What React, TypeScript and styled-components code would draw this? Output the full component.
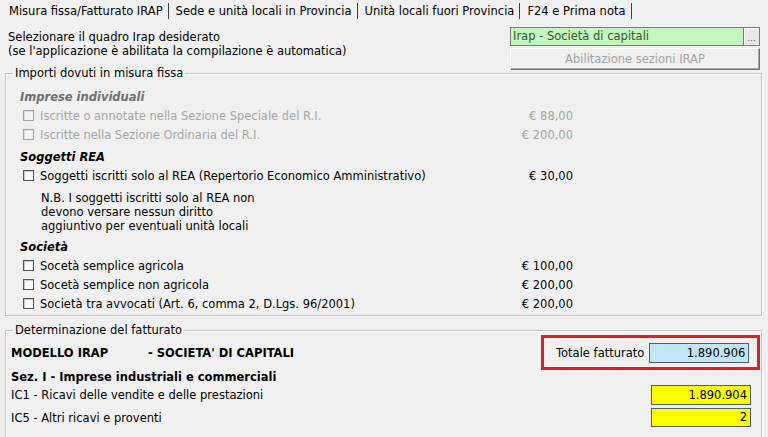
import React from "react";
import styled, {createGlobalStyle} from "styled-components";

const GlobalStyle = createGlobalStyle`
body {
  margin: 0;
  background: #f0f0f0;
  font-family: "DejaVu Sans", sans-serif;
  font-size: 11.5px;
  color: #000;
}
`

const Page = styled.div`
width: 768px;
height: 437px;
overflow: hidden;
background: #f0f0f0;
`

const TabBar = styled.div`
display: flex;
align-items: center;
height: 21px;
padding-left: 2px;
`

const Tab = styled.div`
height: 16px;
line-height: 17px;
padding: 0 5px 0 7px;
border-right: 1px solid #3c3c3c;
white-space: nowrap;
`

const Header = styled.div`
display: flex;
justify-content: space-between;
padding: 6px 8px 0 8px;
`

const Hint = styled.div`
padding-top: 3px;
line-height: 14px;
`

const RightCol = styled.div`
display: flex;
flex-direction: column;
gap: 2px;
width: 250px;
`

const Picker = styled.div`
display: flex;
height: 19px;
`

const PickerValue = styled.div`
flex: 1;
background: #c6f6bf;
color: #2d5a2d;
border: 1px solid #7a7a7a;
border-right: none;
padding-left: 2px;
line-height: 17px;
`

const DotsButton = styled.div`
width: 15px;
background: #e9e9e9;
border: 1px solid #7a7a7a;
box-shadow: inset 1px 1px 0 #fff;
color: #555;
font-size: 9px;
text-align: center;
line-height: 20px;
`

const DisabledButton = styled.div`
height: 22px;
box-sizing: border-box;
border: 1px solid;
border-color: #fff #6e6e6e #6e6e6e #fff;
box-shadow: inset -1px -1px 0 #a8a8a8;
color: #a3a3a3;
text-align: center;
line-height: 20px;
`

const Group = styled.fieldset<{ $gap?: number }>`
margin: ${({$gap}) => $gap || 0}px 6px 0 5px;
padding: 0;
border: 1px solid #c4c4c4;
box-shadow: inset 1px 1px 0 #fff, 1px 1px 0 #fff;
min-width: 0;
`

const Legend = styled.legend`
margin-left: 7px;
padding: 0 2px;
line-height: 14px;
`

const List = styled.div`
width: 553px;
padding: 8px 0 2px 14px;
`

const SectionTitle = styled.div<{ $disabled?: boolean; $top?: number }>`
height: 18px;
line-height: 18px;
margin-top: ${({$top}) => $top || 0}px;
font-weight: bold;
font-style: italic;
color: ${({$disabled}) => $disabled ? '#6f6f6f' : '#000'};
`

const Row = styled.div<{ $disabled?: boolean }>`
display: flex;
align-items: center;
height: 19px;
color: ${({$disabled}) => $disabled ? '#a6a6a6' : '#000'};
`

const Check = styled.span<{ $disabled?: boolean }>`
width: 11px;
height: 11px;
margin: 0 6px 0 3px;
box-sizing: border-box;
border: 1px solid ${({$disabled}) => $disabled ? '#a4a4a4' : '#555'};
background: ${({$disabled}) => $disabled ? '#f4f4f4' : '#fbfbfb'};
box-shadow: inset 1px 1px 0 ${({$disabled}) => $disabled ? '#dcdcdc' : '#c8c8c8'};
`

const Amount = styled.span`
margin-left: auto;
`

const Note = styled.div`
margin: 6px 0 0 21px;
line-height: 14px;
`

const Body = styled.div`
height: 200px;
padding: 0 1px 0 5px;
`

const ModelRow = styled.div`
display: flex;
align-items: center;
justify-content: space-between;
height: 35px;
margin-top: -2px;
font-weight: bold;
`

const ModelName = styled.span`
display: inline-block;
width: 137px;
`

const TotalBox = styled.div`
display: flex;
align-items: center;
gap: 5px;
width: 219px;
height: 35px;
box-sizing: border-box;
border: 3px solid #d6202a;
padding: 0 5px 0 12px;
font-weight: normal;
white-space: nowrap;
`

const Field = styled.div<{ $tone: 'blue' | 'yellow'; $h?: number }>`
width: 100px;
height: ${({$h}) => $h || 19}px;
box-sizing: border-box;
border: 1px solid #4f5f66;
background: ${({$tone}) => $tone === 'blue' ? '#c3e5f9' : '#ffff00'};
text-align: right;
padding-right: 3px;
line-height: ${({$h}) => ($h || 19) - 2}px;
`

const SubTitle = styled.div`
font-weight: bold;
line-height: 14px;
`

const FieldRow = styled.div<{ $top: number }>`
display: flex;
align-items: center;
justify-content: space-between;
padding-right: 9px;
margin-top: ${({$top}) => $top}px;
`

const tabs = ['Misura fissa/Fatturato IRAP', 'Sede e unità locali in Provincia', 'Unità locali fuori Provincia', 'F24 e Prima nota']

const societa = [
    {label: 'Socetà semplice agricola', amount: '€ 100,00'},
    {label: 'Socetà semplice non agricola', amount: '€ 200,00'},
    {label: 'Società tra avvocati (Art. 6, comma 2, D.Lgs. 96/2001)', amount: '€ 200,00'},
]

const App = () => {
    return <Page>
        <GlobalStyle/>
        <TabBar>
            {tabs.map(t => <Tab key={t}>{t}</Tab>)}
        </TabBar>
        <Header>
            <Hint>
                Selezionare il quadro Irap desiderato<br/>
                (se l'applicazione è abilitata la compilazione è automatica)
            </Hint>
            <RightCol>
                <Picker>
                    <PickerValue>Irap - Società di capitali</PickerValue>
                    <DotsButton>...</DotsButton>
                </Picker>
                <DisabledButton>Abilitazione sezioni IRAP</DisabledButton>
            </RightCol>
        </Header>
        <Group $gap={-4}>
            <Legend>Importi dovuti in misura fissa</Legend>
            <List>
                <SectionTitle $disabled>Imprese individuali</SectionTitle>
                <Row $disabled><Check $disabled/>Iscritte o annotate nella Sezione Speciale del R.I.<Amount>€ 88,00</Amount></Row>
                <Row $disabled><Check $disabled/>Iscritte nella Sezione Ordinaria del R.I.<Amount>€ 200,00</Amount></Row>
                <SectionTitle $top={4}>Soggetti REA</SectionTitle>
                <Row><Check/>Soggetti iscritti solo al REA (Repertorio Economico Amministrativo)<Amount>€ 30,00</Amount></Row>
                <Note>
                    N.B. I soggetti iscritti solo al REA non<br/>
                    devono versare nessun diritto<br/>
                    aggiuntivo per eventuali unità locali
                </Note>
                <SectionTitle $top={5}>Società</SectionTitle>
                {societa.map(s => <Row key={s.label}><Check/>{s.label}<Amount>{s.amount}</Amount></Row>)}
            </List>
        </Group>
        <Group $gap={7}>
            <Legend>Determinazione del fatturato</Legend>
            <Body>
                <ModelRow>
                    <span><ModelName>MODELLO IRAP</ModelName>- SOCIETA' DI CAPITALI</span>
                    <TotalBox>
                        Totale fatturato
                        <Field $tone="blue" $h={20}>1.890.906</Field>
                    </TotalBox>
                </ModelRow>
                <SubTitle>Sez. I - Imprese industriali e commerciali</SubTitle>
                <FieldRow $top={1}>
                    IC1 - Ricavi delle vendite e delle prestazioni
                    <Field $tone="yellow" $h={20}>1.890.904</Field>
                </FieldRow>
                <FieldRow $top={3}>
                    IC5 - Altri ricavi e proventi
                    <Field $tone="yellow">2</Field>
                </FieldRow>
            </Body>
        </Group>
    </Page>
}

export default App
